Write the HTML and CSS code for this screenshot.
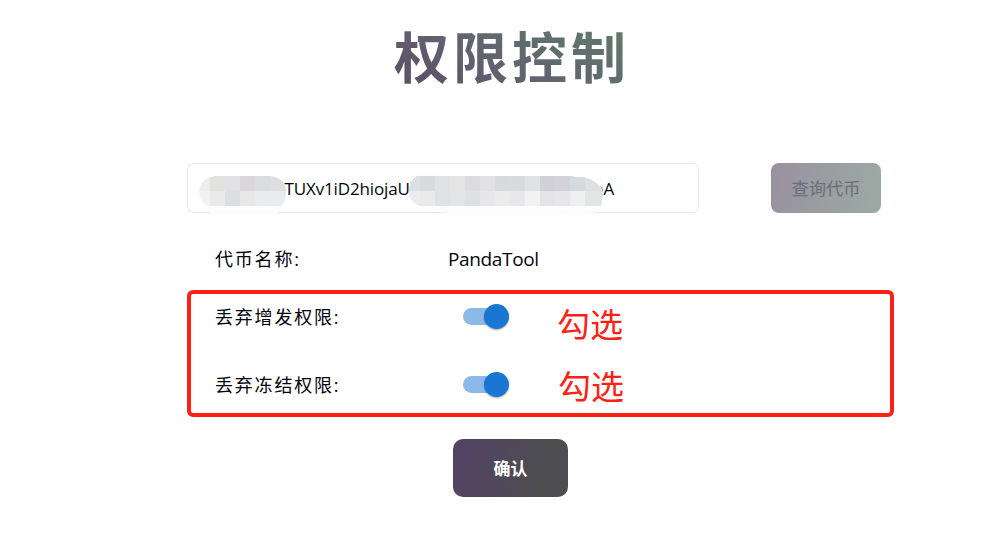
FILE: index.html
```html
<!DOCTYPE html>
<html lang="zh-CN">
<head>
<meta charset="utf-8">
<title>权限控制</title>
<link rel="stylesheet" href="styles.css">
</head>
<body>
<main class="page">
  <h1 class="title">权限控制</h1>
  <section class="search">
    <div class="field">
      <span class="address">CTUXv1iD2hiojaU</span>
      <span class="address-end">bA</span>
      <svg class="mask" width="510" height="54" viewBox="188 162 510 54">
        <defs>
          <clipPath id="left"><path d="M215 176H270Q286 178 286 192Q286 201 281 206H207Q199 201 199 191Q201 178 215 176Z"/></clipPath>
          <clipPath id="right"><path d="M417 176H572L575 177H583Q601 181 603 196L601 206H420Q409 203 409 190Q409 180 417 176Z"/></clipPath>
        </defs>
        <path fill="#fdfdfd" d="M199 190Q200 173 218 174H270Q289 180 286 197Q284 215 265 215H218Q200 212 199 190ZM409 190Q409 174 424 171L450 174H578Q603 179 603 195Q604 214 580 216L550 213H449Q416 211 409 190Z"/>
        <g clip-path="url(#left)" shape-rendering="crispEdges">
          <path fill="#ededee" d="M195 176h15v15h-15z"/><path fill="#e1e1df" d="M210 176h15v15h-15z"/><path fill="#e1e1e3" d="M225 176h15v15h-15z"/><path fill="#d9d7dc" d="M240 176h15v15h-15z"/><path fill="#d9dce0" d="M255 176h15v15h-15z"/><path fill="#dcdee0" d="M270 176h16v15h-16z"/>
          <path fill="#f2f2f2" d="M195 191h15v15h-15z"/><path fill="#eaeaea" d="M210 191h15v15h-15z"/><path fill="#dcdee2" d="M225 191h15v15h-15z"/><path fill="#e8e8e9" d="M240 191h15v15h-15z"/><path fill="#eaecee" d="M255 191h15v15h-15z"/><path fill="#e9ebee" d="M270 191h16v15h-16z"/>
        </g>
        <g clip-path="url(#right)" shape-rendering="crispEdges">
          <path fill="#dce0e4" d="M405 176h15v15h-15z"/><path fill="#d9dadd" d="M420 176h15v15h-15z"/><path fill="#e0e1e3" d="M435 176h15v15h-15z"/><path fill="#e5e5e6" d="M450 176h15v15h-15z"/><path fill="#dcdce0" d="M465 176h15v15h-15z"/><path fill="#e2e2e5" d="M480 176h15v15h-15z"/><path fill="#d8d9de" d="M495 176h15v15h-15z"/><path fill="#d8dadb" d="M510 176h15v15h-15z"/><path fill="#e0e1e3" d="M525 176h15v15h-15z"/><path fill="#d1cfd8" d="M540 176h15v15h-15z"/><path fill="#d3d2d8" d="M555 176h15v15h-15z"/><path fill="#d6dade" d="M570 176h15v15h-15z"/><path fill="#dddfe0" d="M585 176h20v15h-20z"/>
          <path fill="#eaecef" d="M405 191h15v15h-15z"/><path fill="#e9e9e9" d="M420 191h15v15h-15z"/><path fill="#dee2e2" d="M435 191h15v15h-15z"/><path fill="#e3e4e5" d="M450 191h15v15h-15z"/><path fill="#dfe0e5" d="M465 191h15v15h-15z"/><path fill="#e7e7e9" d="M480 191h15v15h-15z"/><path fill="#ebebeb" d="M495 191h15v15h-15z"/><path fill="#e8e8ea" d="M510 191h15v15h-15z"/><path fill="#f1f1f1" d="M525 191h15v15h-15z"/><path fill="#e4e4e7" d="M540 191h15v15h-15z"/><path fill="#e7e7e9" d="M555 191h15v15h-15z"/><path fill="#f0f0f0" d="M570 191h15v15h-15z"/><path fill="#e3e4e6" d="M585 191h20v15h-20z"/>
        </g>
      </svg>
    </div>
    <button class="query" disabled>查询代币</button>
  </section>
  <section class="row token"><span class="label">代币名称:</span><span class="value">PandaTool</span></section>
  <section class="permissions">
    <div class="row"><span class="label">丢弃增发权限:</span><span class="switch"></span><span class="note">勾选</span></div>
    <div class="row"><span class="label">丢弃冻结权限:</span><span class="switch"></span><span class="note note-second">勾选</span></div>
  </section>
  <button class="confirm">确认</button>
</main>
</body>
</html>
```
FILE: styles.css
```css
* { box-sizing: border-box; }
body {
  margin: 0;
  background: #fff;
  color: #03050d;
  font-family: "Open Sans", "Noto Sans CJK SC", sans-serif;
}
.page { width: 999px; height: 540px; padding: 18px 0 0 187px; overflow: hidden; }
.title {
  width: 240px;
  height: 72px;
  margin: 0 0 73px 207px;
  font: 700 55px/72px "Noto Sans CJK SC", sans-serif;
  letter-spacing: 4px;
  white-space: nowrap;
  color: transparent;
  background: linear-gradient(25deg, #5e5368 15%, #626270 40%, #60716c 72%, #647e6e);
  -webkit-background-clip: text;
  background-clip: text;
}
.search { display: flex; gap: 72px; }
.field {
  position: relative;
  display: flex;
  align-items: center;
  width: 512px;
  height: 50px;
  padding-left: 86px;
  border: 1px solid #e2e8f0;
  border-radius: 7px;
  font-size: 17px;
  white-space: nowrap;
}
.address { width: 319px; letter-spacing: -.15px; }
.address-end { letter-spacing: 0; }
.mask { position: absolute; left: 0; top: -2px; }
button { padding: 0; border: 0; font-family: "Noto Sans CJK SC", sans-serif; }
.query {
  width: 110px;
  height: 50px;
  padding-bottom: 2px;
  border-radius: 8px;
  color: #68707a;
  background: linear-gradient(100deg, #99919f, #9caaa3);
  font-size: 17.3px;
  font-weight: 400;
}
.row { display: flex; align-items: center; }
.label { flex: none; font-size: 18px; white-space: nowrap; }
.token { height: 24px; margin: 34px 0 19px; padding-left: 28px; }
.token .label { width: 233px; margin-bottom: 2px; letter-spacing: 1.8px; }
.value { font-size: 19px; letter-spacing: -.35px; }
.permissions {
  width: 707px;
  height: 127px;
  padding-left: 24px;
  border: 4px solid #ff2015;
  border-radius: 6px;
}
.permissions .row { height: 45px; }
.permissions .row + .row { margin-top: 23px; }
.permissions .label { width: 248px; margin-bottom: 1px; letter-spacing: 1.8px; }
.switch {
  display: flex;
  align-items: center;
  justify-content: flex-end;
  width: 46px;
  height: 17px;
  border-radius: 9px;
  background: linear-gradient(90deg, #8cb9e8 38px, transparent 38px);
}
.switch::after {
  content: "";
  width: 25px;
  height: 25px;
  border-radius: 50%;
  background: #1976d2;
  box-shadow: 0 1px 2px #0005;
}
.note {
  margin: 12px 0 0 48px;
  color: #ff2015;
  font: 400 33px/40px "Noto Sans CJK SC", sans-serif;
}
.note-second { margin: 1px 0 0 49px; }
.confirm {
  display: block;
  width: 115px;
  height: 58px;
  margin: 22px 0 0 266px;
  padding-bottom: 1px;
  border-radius: 10px;
  color: #fff;
  background: linear-gradient(100deg, #544266, #4d4d50 75%);
  font-size: 17px;
  font-weight: 700;
}
```
